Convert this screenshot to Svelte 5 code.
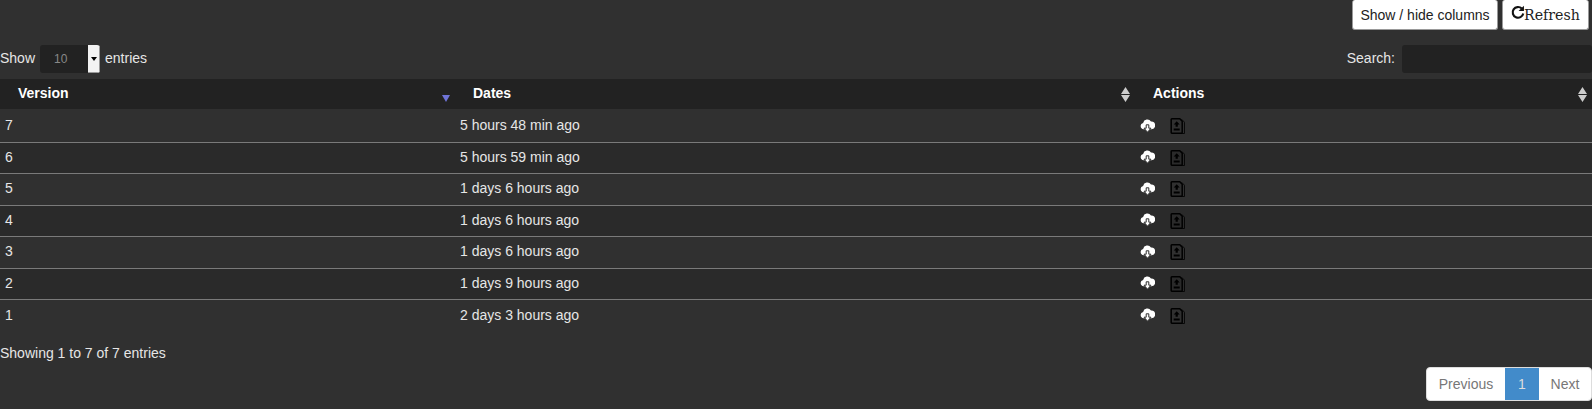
<script>
  // version history table (DataTables look)
  const rows = [
    { version: 7, date: '5 hours 48 min ago' },
    { version: 6, date: '5 hours 59 min ago' },
    { version: 5, date: '1 days 6 hours ago' },
    { version: 4, date: '1 days 6 hours ago' },
    { version: 3, date: '1 days 6 hours ago' },
    { version: 2, date: '1 days 9 hours ago' },
    { version: 1, date: '2 days 3 hours ago' }
  ]
</script>

{#snippet sortBoth()}
  <svg class="sort-both" viewBox="0 0 9 15" width="9" height="15">
    <path d="M4.5 0L9 7H0zM0 8h9l-4.5 7z" fill="#ccc" />
  </svg>
{/snippet}

<div class="page">
  <div class="buttons">
    <button class="btn">Show / hide columns</button>
    <button class="btn refresh">
      <svg viewBox="0 0 14 14" width="15" height="15">
        <path d="M11 3.3A5 5 0 1 0 12.4 8" fill="none" stroke="#111" stroke-width="2" />
        <path d="M13 .6v5H8z" fill="#111" />
      </svg><span>Refresh</span>
    </button>
  </div>

  <div class="controls">
    <div class="length">
      <span class="label">Show</span>
      <div class="select">
        <span class="select-value">10</span>
        <span class="select-arrow"><i></i></span>
      </div>
      <span class="label">entries</span>
    </div>
    <div class="search">
      <span class="label">Search:</span>
      <div class="search-input"></div>
    </div>
  </div>

  <table>
    <thead>
      <tr>
        <th class="col-version"><span>Version</span><span class="sort-desc"></span></th>
        <th class="col-dates"><span>Dates</span>{@render sortBoth()}</th>
        <th class="col-actions"><span>Actions</span>{@render sortBoth()}</th>
      </tr>
    </thead>
    <tbody>
      {#each rows as row (row.version)}
        <tr>
          <td>{row.version}</td>
          <td>{row.date}</td>
          <td>
            <div class="actions">
              <svg viewBox="0 0 15 15" width="15" height="15">
                <path d="M3.6 11.2a3.2 3.2 0 0 1-.5-6.3A4.3 4.3 0 0 1 11 3.6a3.8 3.8 0 0 1 .6 7.6z" fill="#fff" />
                <path d="M6.2 6.8h2.6v3.4h2.2l-3.5 4-3.5-4h2.2z" fill="#fff" stroke="#303030" stroke-width="1" />
              </svg>
              <svg class="sheet" viewBox="0 0 15 16" width="15" height="16">
                <path d="M1.8.8h8l2.4 2.4v11.4a.6.6 0 0 1-.6.6H1.8a.6.6 0 0 1-.6-.6V1.4a.6.6 0 0 1 .6-.6z" fill="none" stroke="#000" stroke-width="1.5" />
                <path d="M11.5 1.2l3 3v11.3H4" fill="none" stroke="#000" stroke-width="0.8" />
                <path d="M6.7 3.2l3 3.2H7.8v2.4H5.6V6.4H3.7zM3.7 10.6h6v2h-6z" fill="#000" />
              </svg>
            </div>
          </td>
        </tr>
      {/each}
    </tbody>
  </table>

  <div class="info">Showing 1 to 7 of 7 entries</div>

  <div class="pager">
    <div class="pages">
      <span class="page-item prev">Previous</span>
      <span class="page-item current">1</span>
      <span class="page-item next">Next</span>
    </div>
  </div>
</div>

<style>
  :global(body) {
    margin: 0;
    background: #303030;
  }
  .page {
    height: 409px;
    overflow: hidden;
    background: #303030;
    color: #e6e6e6;
    font-family: "Liberation Sans", Arial, sans-serif;
    font-size: 14px;
    line-height: 20px;
  }
  .buttons {
    display: flex;
    justify-content: flex-end;
    gap: 4px;
    padding-right: 3px;
  }
  .btn {
    height: 30px;
    width: 146px;
    padding: 0;
    background: #fff;
    color: #222;
    border: 1px solid #999;
    border-top: none;
    border-radius: 3px;
    font-family: "Liberation Sans", Arial, sans-serif;
    font-size: 14px;
  }
  .refresh {
    display: flex;
    align-items: center;
    font-family: "DejaVu Serif", serif;
    width: 87px;
    padding: 0 0 0 7px;
  }
  .refresh svg {
    margin-bottom: 5px;
  }
  .refresh span {
    margin-left: -1px;
    font-size: 14.2px;
  }
  .controls {
    display: flex;
    justify-content: space-between;
    align-items: center;
    margin-top: 15px;
    height: 28px;
  }
  .length, .search {
    display: flex;
    align-items: center;
  }
  .label {
    margin-bottom: 2px;
  }
  .select {
    display: flex;
    width: 60px;
    height: 28px;
    margin: 0 5px;
    background: #222;
    border-radius: 3px;
    overflow: hidden;
  }
  .select-value {
    flex: 1;
    align-self: center;
    padding-left: 14px;
    font-size: 12px;
    color: #888;
  }
  .select-arrow {
    display: flex;
    align-items: center;
    justify-content: center;
    width: 12px;
    background: #f2f2f2;
    border-right: 1px solid #999;
    border-bottom: 1px solid #999;
    box-sizing: border-box;
  }
  .select-arrow i {
    border: 3px solid transparent;
    border-top: 4px solid #000;
    border-bottom: 0;
  }
  .search-input {
    width: 190px;
    height: 28px;
    margin-left: 7px;
    background: #222;
    border-radius: 3px;
  }
  table {
    width: 100%;
    margin-top: 6px;
    border-collapse: collapse;
    table-layout: fixed;
  }
  th {
    position: relative;
    height: 30px;
    padding: 0 0 2px 18px;
    background: #222;
    color: #fff;
    font-weight: 700;
    text-align: left;
    box-sizing: border-box;
  }
  .col-version { width: 455px; }
  .col-dates { width: 680px; }
  .sort-desc {
    position: absolute;
    right: 5px;
    bottom: 7px;
    border: 4px solid transparent;
    border-top: 7px solid #6f74d8;
    border-bottom: 0;
  }
  .sort-both {
    position: absolute;
    right: 5px;
    top: 8px;
  }
  td {
    height: 31.5px;
    padding: 0 0 2px 5px;
    border-top: 1px solid #7a7a7a;
    box-sizing: border-box;
  }
  tbody tr:first-child td {
    height: 33px;
    padding-bottom: 0;
    border-top: none;
  }
  tbody tr:nth-child(even) td {
    background: #2a2a2a;
  }
  tbody tr:nth-child(odd) td {
    background: #303030;
  }
  .actions {
    display: flex;
    align-items: center;
    gap: 15px;
  }
  .sheet {
    margin-top: 2px;
  }
  .info {
    margin-top: 12px;
  }
  .pager {
    display: flex;
    justify-content: flex-end;
    margin-top: 4px;
  }
  .pages {
    display: flex;
    height: 34px;
    background: #fff;
    border-radius: 4px;
    overflow: hidden;
    border: 1px solid #ddd;
    box-sizing: border-box;
  }
  .page-item {
    display: flex;
    align-items: center;
    justify-content: center;
    color: #777;
  }
  .prev { width: 78px; }
  .current { width: 34px; background: #428bca; color: #ddd; }
  .next { width: 52px; }
</style>
